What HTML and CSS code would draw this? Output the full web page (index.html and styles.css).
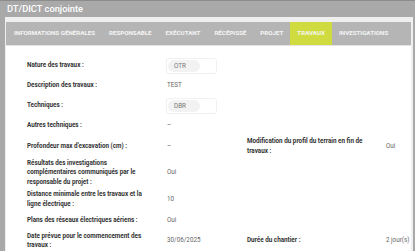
FILE: index.html
```html
<!DOCTYPE html>
<html lang="fr">
<head>
    <meta charset="UTF-8">
    <meta name="viewport" content="width=device-width, initial-scale=1.0">
    <title>DT/DICT conjointe</title>
    <link rel="stylesheet" href="styles.css">
</head>
<body>
    <div class="window">
        <div class="title-bar">DT/DICT conjointe</div>

        <div class="inner">
            <div class="tabs">
                <div class="tab">Informations générales</div>
                <div class="tab">Responsable</div>
                <div class="tab">Exécutant</div>
                <div class="tab">Récépissé</div>
                <div class="tab">Projet</div>
                <div class="tab active">Travaux</div>
                <div class="tab">Investigations</div>
            </div>

            <div class="panel">
                <div class="fields">
                    <div class="label">Nature des travaux :</div>
                    <div class="value"><span class="select"><span class="chip">OTR</span></span></div>
                    <div class="label right"></div>
                    <div class="value"></div>

                    <div class="label">Description des travaux :</div>
                    <div class="value">TEST</div>
                    <div class="label right"></div>
                    <div class="value"></div>

                    <div class="label">Techniques :</div>
                    <div class="value"><span class="select"><span class="chip">DBR</span></span></div>
                    <div class="label right"></div>
                    <div class="value"></div>

                    <div class="label">Autres techniques :</div>
                    <div class="value">–</div>
                    <div class="label right"></div>
                    <div class="value"></div>

                    <div class="label">Profondeur max d'excavation (cm) :</div>
                    <div class="value">–</div>
                    <div class="label right">Modification du profil du terrain en fin de travaux :</div>
                    <div class="value">Oui</div>

                    <div class="label">Résultats des investigations complémentaires communiqués par le responsable du projet :</div>
                    <div class="value">Oui</div>
                    <div class="label right"></div>
                    <div class="value"></div>

                    <div class="label">Distance minimale entre les travaux et la ligne électrique :</div>
                    <div class="value">10</div>
                    <div class="label right"></div>
                    <div class="value"></div>

                    <div class="label">Plans des réseaux électriques aériens :</div>
                    <div class="value">Oui</div>
                    <div class="label right"></div>
                    <div class="value"></div>

                    <div class="label">Date prévue pour le commencement des travaux :</div>
                    <div class="value">30/06/2025</div>
                    <div class="label right">Durée du chantier :</div>
                    <div class="value">2 jour(s)</div>
                </div>
            </div>
        </div>
    </div>
</body>
</html>
```

FILE: styles.css
```css
body {
    margin: 0;
    background: #a9a9a9;
    font-family: Roboto, "Liberation Sans", sans-serif;
    overflow: hidden;
}

.window {
    height: 100vh;
    display: flex;
    flex-direction: column;
}

.title-bar {
    height: 16px;
    line-height: 16px;
    padding-left: 7px;
    border-top: 1px solid #8c8c8c;
    color: #fff;
    font-size: 9.3px;
    font-weight: 500;
}

.inner {
    flex: 1;
    margin: 0 2px 0 5px;
    padding: 5px 2px 0 1px;
    background: #efefef;
    display: flex;
    flex-direction: column;
}

.tabs {
    display: flex;
    height: 23px;
    padding-left: 1px;
    background: #b5b5b5;
}

.tab {
    padding: 0 7px;
    line-height: 23px;
    font-size: 6.2px;
    font-weight: 700;
    color: #f6f6f6;
    text-transform: uppercase;
    white-space: nowrap;
}

.tab.active {
    background: #cfdb3e;
}

.panel {
    flex: 1;
    background: #fff;
    border-top: 1px solid #e4e4e4;
    padding: 11px 0 0 21px;
}

.fields {
    display: grid;
    grid-template-columns: 140px 80px 139px 1fr;
    row-gap: 2px;
    align-items: center;
    font-size: 6.3px;
    line-height: 9.8px;
}

.label {
    padding-right: 20px;
    min-height: 18px;
    display: flex;
    align-items: center;
    font-weight: 700;
    color: #333;
}

.label.right {
    padding-right: 4px;
}

.value {
    color: #666;
    white-space: nowrap;
}

.select {
    display: inline-flex;
    align-items: center;
    width: 47px;
    height: 14px;
    margin-left: -1px;
    padding: 0 1px;
    border: 1px solid #f0f0f0;
    border-radius: 3px;
}

.chip {
    display: inline-block;
    width: 26px;
    height: 12px;
    line-height: 12px;
    padding-left: 6px;
    border-radius: 6px;
    background: #f2f2f2;
    color: #777;
}
```
